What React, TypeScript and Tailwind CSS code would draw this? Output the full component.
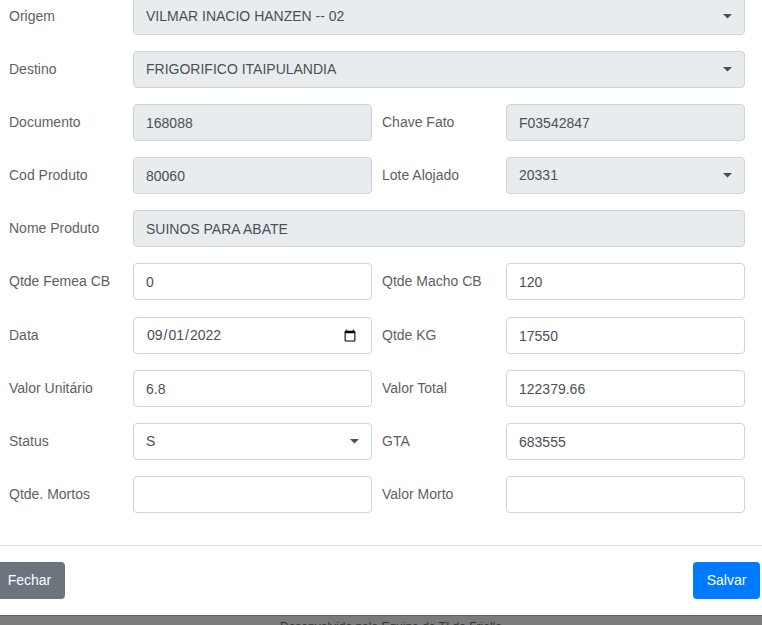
import type { ReactNode } from "react";

const control =
  "block h-[37px] w-full rounded border border-[#ced4da] bg-white px-3 text-[#495057] opacity-100 outline-none focus:border-[#80bdff] disabled:bg-[#e9ecef]";

type FieldProps = {
  id: string;
  label: string;
  children: ReactNode;
  wide?: boolean;
};

function Field({ id, label, children, wide }: FieldProps) {
  return (
    <div className={wide ? "col-span-2 flex items-center" : "flex items-center"}>
      <label htmlFor={id} className="w-[124px] shrink-0 text-[#5f5f5f]">
        {label}
      </label>
      <div className="min-w-0 flex-1">{children}</div>
    </div>
  );
}

type InputProps = {
  id: string;
  label: string;
  value: string;
  type?: string;
  disabled?: boolean;
  wide?: boolean;
};

function InputField({ id, label, value, type = "text", disabled, wide }: InputProps) {
  return (
    <Field id={id} label={label} wide={wide}>
      <input id={id} type={type} defaultValue={value} disabled={disabled} className={control} />
    </Field>
  );
}

function SelectField({ id, label, value, disabled, wide }: InputProps) {
  return (
    <Field id={id} label={label} wide={wide}>
      <div className="relative">
        <select
          id={id}
          defaultValue={value}
          disabled={disabled}
          className={`${control} appearance-none`}
        >
          <option value={value}>{value}</option>
        </select>
        <svg
          viewBox="0 0 9 5"
          className="pointer-events-none absolute top-4 right-[13px] h-[5px] w-[9px] fill-[#495057]"
          aria-hidden="true"
        >
          <path d="M0 0h9L4.5 4.5z" />
        </svg>
      </div>
    </Field>
  );
}

export default function App() {
  return (
    <div className="h-screen overflow-hidden bg-[#7b7b7b] font-['Liberation_Sans',Arial,sans-serif] text-[14px] leading-[21px]">
      <form className="-mt-0.5 border-b border-[#626262] bg-white" onSubmit={(e) => e.preventDefault()}>
        <div className="flex flex-col gap-[17px] pr-[17px] pb-8 pl-[9px]">
          <div className="grid grid-cols-2 gap-x-2.5 gap-y-4">
            <SelectField id="origem" label="Origem" value="VILMAR INACIO HANZEN -- 02" disabled wide />
            <SelectField id="destino" label="Destino" value="FRIGORIFICO ITAIPULANDIA" disabled wide />
            <InputField id="documento" label="Documento" value="168088" disabled />
            <InputField id="chave" label="Chave Fato" value="F03542847" disabled />
            <InputField id="codigo" label="Cod Produto" value="80060" disabled />
            <SelectField id="lote" label="Lote Alojado" value="20331" disabled />
            <InputField id="produto" label="Nome Produto" value="SUINOS PARA ABATE" disabled wide />
            <InputField id="femea" label="Qtde Femea CB" value="0" />
            <InputField id="macho" label="Qtde Macho CB" value="120" />
          </div>
          <div className="grid grid-cols-2 gap-x-2.5 gap-y-4">
            <InputField id="data" label="Data" type="date" value="2022-09-01" />
            <InputField id="kg" label="Qtde KG" value="17550" />
            <InputField id="unitario" label="Valor Unitário" value="6.8" />
            <InputField id="total" label="Valor Total" value="122379.66" />
            <SelectField id="status" label="Status" value="S" />
            <InputField id="gta" label="GTA" value="683555" />
            <InputField id="mortos" label="Qtde. Mortos" value="" />
            <InputField id="morto" label="Valor Morto" value="" />
          </div>
        </div>
        <div className="flex items-center justify-between border-t border-[#dee2e6] py-4 pr-0.5">
          <button type="button" className="-ml-1.5 h-[37px] min-w-[71px] rounded bg-[#6c757d] px-3 text-white">
            Fechar
          </button>
          <button type="submit" className="h-[37px] min-w-[67px] rounded bg-[#007bff] px-3 text-white">
            Salvar
          </button>
        </div>
      </form>
      <footer className="pt-[3px] pl-5 text-center text-[12px] leading-4 text-[#333333]">
        Desenvolvido pela Equipe de TI da Friella
      </footer>
    </div>
  );
}
